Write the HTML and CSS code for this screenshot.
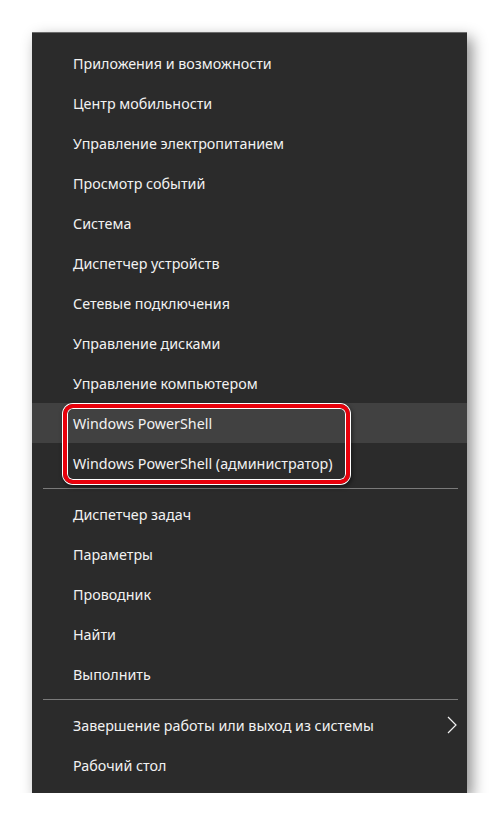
FILE: index.html
```html
<!DOCTYPE html>
<html lang="ru">
  <head>
    <meta charset="UTF-8" />
    <meta name="viewport" content="width=device-width, initial-scale=1.0" />
    <title>Меню Win+X</title>
    <link rel="stylesheet" href="styles.css">
  </head>
  <body>
    <div class="menu">
      <div class="menu_item">Приложения и возможности</div>
      <div class="menu_item">Центр мобильности</div>
      <div class="menu_item">Управление электропитанием</div>
      <div class="menu_item">Просмотр событий</div>
      <div class="menu_item">Система</div>
      <div class="menu_item">Диспетчер устройств</div>
      <div class="menu_item">Сетевые подключения</div>
      <div class="menu_item">Управление дисками</div>
      <div class="menu_item">Управление компьютером</div>

      <div class="menu_group marked">
        <div class="menu_item hover">Windows PowerShell</div>
        <div class="menu_item">Windows PowerShell (администратор)</div>
      </div>

      <div class="menu_sep"></div>

      <div class="menu_item">Диспетчер задач</div>
      <div class="menu_item">Параметры</div>
      <div class="menu_item">Проводник</div>
      <div class="menu_item">Найти</div>
      <div class="menu_item">Выполнить</div>

      <div class="menu_sep"></div>

      <div class="menu_item sub">
        Завершение работы или выход из системы
        <svg class="chevron" width="10" height="18" viewBox="0 0 10 18">
          <path d="M1 1 L9 9 L1 17" fill="none" stroke="#f2f2f2" stroke-width="1.2" />
        </svg>
      </div>
      <div class="menu_item">Рабочий стол</div>
    </div>
  </body>
</html>
```

FILE: styles.css
```css
body {
  margin: 0;
  background: #ffffff;
  font-family: "Noto Sans", "Open Sans", sans-serif;
}

.menu {
  margin: 32px 0 0 32px;
  width: 435px;
  padding: 10px 0 8px 0;
  background: #2b2b2b;
  border-top: 1px solid #6b6b6b;
  box-sizing: border-box;
  box-shadow: 5px 6px 14px rgba(0, 0, 0, 0.45);
}

.menu_item {
  height: 40px;
  display: flex;
  align-items: center;
  padding-left: 41px;
  padding-right: 10px;
  color: #f2f2f2;
  font-size: 14.3px;
}

.menu_item.hover {
  background: #414141;
}

.menu_item.sub {
  justify-content: space-between;
}

.chevron {
  display: block;
}

.menu_sep {
  height: 1px;
  margin: 5px 9px 5px 11px;
  background: #7a7a7a;
}

/* red frame drawn round the PowerShell pair */
.menu_group {
  position: relative;
}

.menu_group.marked::after {
  content: "";
  position: absolute;
  left: 31px;
  right: 117px;
  top: 1px;
  bottom: -1px;
  border: 4px solid #e8000b;
  border-radius: 10px;
  box-shadow: 0 0 0 1px #ffffff, inset 0 0 0 1px #ffffff, 1px 2px 4px 1px rgba(0, 0, 0, 0.5);
}
```
